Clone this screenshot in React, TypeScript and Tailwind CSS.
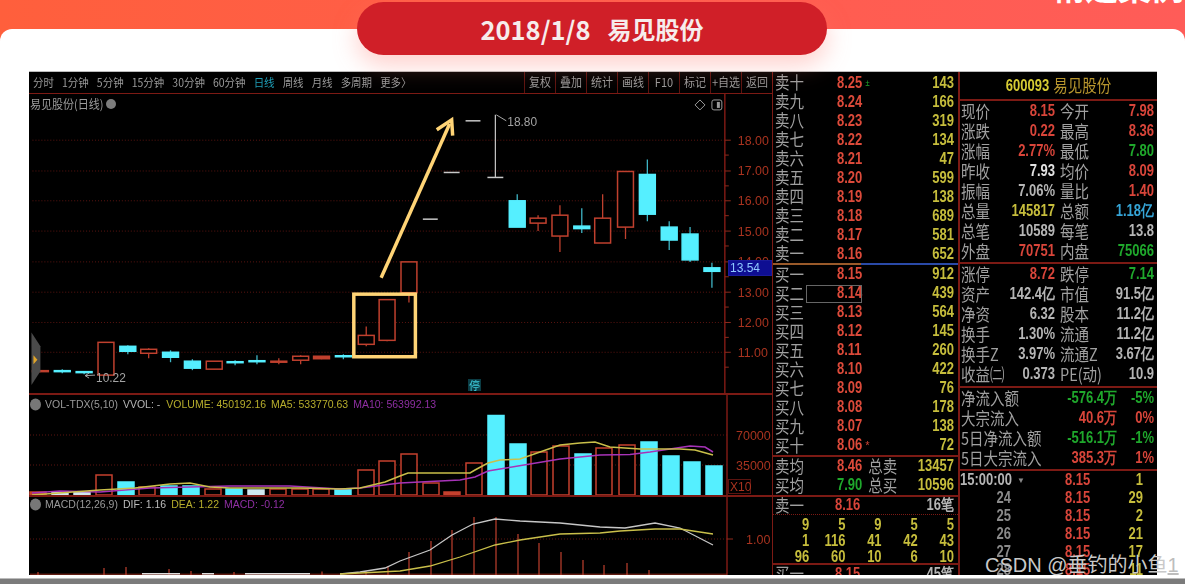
const CN = "font-['Noto_Sans_CJK_SC','Noto_Sans',sans-serif]";
const RED = "#c0402e";
const CYAN = "#55efff";

// x center, body top, body bottom, wick top, wick bottom, kind
type Candle = [number, number, number, number, number, "up" | "fill" | "down"];

const CANDLES: Candle[] = [
  [38, 371.5, 372.5, 371, 373, "fill"],
  [60, 371.5, 372.5, 370, 374, "down"],
  [82, 372.5, 373.5, 372, 375, "down"],
  [104, 343, 376, 343, 376, "up"],
  [126, 347, 352, 346, 355, "down"],
  [147, 350, 354, 349, 359, "up"],
  [169, 353, 358, 351, 363, "down"],
  [191, 362, 369, 360, 371, "down"],
  [213, 362, 370, 362, 370, "up"],
  [234, 362.5, 363.5, 361, 366, "down"],
  [256, 361.5, 362.5, 356, 365, "down"],
  [278, 362, 363, 359, 365, "fill"],
  [300, 357, 361, 356, 365, "up"],
  [321, 357, 359.5, 357, 360, "fill"],
  [343, 356.5, 357.5, 355, 360, "down"],
  [366, 336, 345, 327, 347, "up"],
  [387, 300, 341, 300, 342, "up"],
  [409, 262, 293, 262, 303, "up"],
  [518, 200.5, 227, 194, 227, "down"],
  [539, 218, 223, 215, 231, "up"],
  [561, 215, 236, 205, 252, "up"],
  [583, 226, 228.5, 208, 233, "down"],
  [604, 218, 243, 194, 243, "up"],
  [627, 171, 227, 171, 239, "up"],
  [649, 174, 214, 159, 221, "down"],
  [671, 227, 240, 221, 250, "down"],
  [692, 234, 260, 227, 262, "down"],
  [714, 268, 271.5, 263, 288, "down"],
];

// x center, bar top, kind
const VOLUME: [number, number, "up" | "fill" | "down" | "pale"][] = [
  [38, 492, "fill"], [60, 492, "pale"], [82, 492, "pale"], [104, 475, "up"],
  [126, 482, "down"], [147, 487, "up"], [169, 486, "down"], [191, 486, "down"],
  [213, 489, "up"], [234, 489, "down"], [256, 490, "pale"], [278, 489, "up"],
  [300, 489, "up"], [321, 489, "up"], [343, 489, "down"], [366, 470, "up"],
  [387, 461, "up"], [409, 454, "up"], [431, 483, "up"], [452, 492, "fill"],
  [474, 463, "up"], [496, 415.5, "down"], [518, 444, "down"], [539, 452, "up"],
  [561, 446, "up"], [583, 454, "down"], [604, 448, "up"], [627, 445, "up"],
  [649, 442, "down"], [671, 456, "down"], [692, 462, "down"], [714, 466, "down"],
];

const MA5 =
  "32,495 100,490 135,488 170,484 190,483 210,487 230,488 300,488 340,489 360,488 385,482 400,476 408,473 470,473 475,470 488,463 500,460 520,459 540,452 560,445 580,443 595,442 610,447 640,449 660,449 680,449 695,450 713,455";
const MA10 =
  "32,493 60,491 100,492 150,488 230,486 290,486 340,489 360,488 400,483 460,480 475,477 488,471 500,469 530,464 560,459 580,457 600,455 630,454.5 650,452 670,449 690,446 705,447 713,452";
const DIF =
  "340,574 360,572 385,568 400,561 430,550 452,535 473,524 495,519 520,521 560,523 600,527 625,528 655,523 680,528 713,545";
const DEA =
  "340,574 400,571 430,566 460,557 495,545 520,540 560,534 600,533 620,531 655,529 680,529 713,534";

const MACD_BARS: [number, number][] = [
  [38, 572], [104, 568], [126, 567], [169, 569], [191, 571], [234, 572], [322, 571.5], [366, 571],
  [388, 566], [409, 552], [431, 541], [452, 530], [474, 517], [496, 517], [518, 534],
  [539, 543], [561, 552], [583, 560], [604, 565], [627, 563], [649, 570],
];

const PRICES: [string, number][] = [
  ["18.00", 139.5], ["17.00", 170.5], ["16.00", 200.5], ["15.00", 231],
  ["14.00", 262], ["13.00", 292.5], ["12.00", 323], ["11.00", 353],
];

const ASK: [string, string, string][] = [
  ["卖十", "8.25", "143"], ["卖九", "8.24", "166"], ["卖八", "8.23", "319"], ["卖七", "8.22", "134"],
  ["卖六", "8.21", "47"], ["卖五", "8.20", "599"], ["卖四", "8.19", "138"], ["卖三", "8.18", "689"],
  ["卖二", "8.17", "581"], ["卖一", "8.16", "652"],
];
const BID: [string, string, string][] = [
  ["买一", "8.15", "912"], ["买二", "8.14", "439"], ["买三", "8.13", "564"], ["买四", "8.12", "145"],
  ["买五", "8.11", "260"], ["买六", "8.10", "422"], ["买七", "8.09", "76"], ["买八", "8.08", "178"],
  ["买九", "8.07", "138"], ["买十", "8.06", "72"],
];

const QUOTE_A: [string, string, string, string, string, string][] = [
  ["现价", "8.15", "text-[#d8453a]", "今开", "7.98", "text-[#d8453a]"],
  ["涨跌", "0.22", "text-[#d8453a]", "最高", "8.36", "text-[#d8453a]"],
  ["涨幅", "2.77%", "text-[#d8453a]", "最低", "7.80", "text-[#1fa82c]"],
  ["昨收", "7.93", "text-[#e2e2e2]", "均价", "8.09", "text-[#d8453a]"],
  ["振幅", "7.06%", "text-[#b5b5b5]", "量比", "1.40", "text-[#d8453a]"],
  ["总量", "145817", "text-[#c6bd3c]", "总额", "1.18亿", "text-[#35a4d6]"],
  ["总笔", "10589", "text-[#b5b5b5]", "每笔", "13.8", "text-[#b5b5b5]"],
  ["外盘", "70751", "text-[#d8453a]", "内盘", "75066", "text-[#1fa82c]"],
];
const QUOTE_B: [string, string, string, string, string, string][] = [
  ["涨停", "8.72", "text-[#d8453a]", "跌停", "7.14", "text-[#1fa82c]"],
  ["资产", "142.4亿", "text-[#b5b5b5]", "市值", "91.5亿", "text-[#b5b5b5]"],
  ["净资", "6.32", "text-[#b5b5b5]", "股本", "11.2亿", "text-[#b5b5b5]"],
  ["换手", "1.30%", "text-[#b5b5b5]", "流通", "11.2亿", "text-[#b5b5b5]"],
  ["换手Z", "3.97%", "text-[#b5b5b5]", "流通Z", "3.67亿", "text-[#b5b5b5]"],
  ["收益㈡", "0.373", "text-[#b5b5b5]", "PE(动)", "10.9", "text-[#b5b5b5]"],
];
const FLOW: [string, string, string, string][] = [
  ["净流入额", "-576.4万", "-5%", "text-[#1fa82c]"],
  ["大宗流入", "40.6万", "0%", "text-[#d8453a]"],
  ["5日净流入额", "-516.1万", "-1%", "text-[#1fa82c]"],
  ["5日大宗流入", "385.3万", "1%", "text-[#d8453a]"],
];
const TICKS: [string, string, string][] = [
  ["15:00:00", "8.15", "1"], ["24", "8.15", "29"], ["25", "8.15", "2"],
  ["26", "8.15", "21"], ["27", "8.15", "17"], ["28", "8.15", "11"],
];
const DEAL: string[][] = [
  ["9", "5", "9", "5", "5"],
  ["1", "116", "41", "42", "43"],
  ["96", "60", "10", "6", "10"],
];

const PERIODS = ["分时", "1分钟", "5分钟", "15分钟", "30分钟", "60分钟", "日线", "周线", "月线", "多周期", "更多〉"];
const TOOLS = ["复权", "叠加", "统计", "画线", "F10", "标记", "+自选", "返回"];

function Num({ children, className = "" }: { children: React.ReactNode; className?: string }) {
  return (
    <span className={`inline-block scale-y-125 font-['Liberation_Sans',sans-serif] text-[13px] font-bold whitespace-nowrap ${className}`}>
      {children}
    </span>
  );
}

function Cn({ children, className = "" }: { children: React.ReactNode; className?: string }) {
  return (
    <span className={`inline-block scale-y-[1.2] text-[14.5px] leading-none whitespace-nowrap text-[#a0a0a0] ${CN} ${className}`}>
      {children}
    </span>
  );
}

function DepthRow({ row, mark }: { row: [string, string, string]; mark?: React.ReactNode }) {
  return (
    <div className="flex h-[19px] items-center pr-[4px] pl-[2px]">
      <Cn className="w-[62px]">{row[0]}</Cn>
      <Num className="text-[#dc4a3a]">{row[1]}</Num>
      {mark}
      <Num className="ml-auto text-[#c6bd3c]">{row[2]}</Num>
    </div>
  );
}

function QuoteRow({ row }: { row: [string, string, string, string, string, string] }) {
  return (
    <div className="flex h-[20px] items-center">
      <div className="flex w-[95px] shrink-0 items-center pl-[1px]">
        <Cn>{row[0]}</Cn>
        <Num className={`ml-auto ${row[2]}`}>{row[1]}</Num>
      </div>
      <div className="flex flex-1 items-center pr-[3px] pl-[5px]">
        <Cn>{row[3]}</Cn>
        <Num className={`ml-auto ${row[5]}`}>{row[4]}</Num>
      </div>
    </div>
  );
}

function Candles() {
  return (
    <g>
      {CANDLES.map(([x, top, bottom, wickTop, wickBottom, kind], i) => {
        const stroke = kind === "down" ? CYAN : RED;
        const fill = kind === "up" ? "#000" : stroke;
        return (
          <g key={i}>
            <line x1={x} x2={x} y1={wickTop} y2={wickBottom} stroke={kind === "down" ? "#3fb6c6" : RED} strokeWidth="1.3" />
            <rect x={x - 8} y={top} width="16" height={bottom - top} fill={fill} stroke={stroke} strokeWidth="1.5" />
          </g>
        );
      })}
    </g>
  );
}

function DottedGrid({ ys, x2 = 727 }: { ys: number[]; x2?: number }) {
  return (
    <g>
      {ys.map((y) => (
        <line key={y} x1="30" x2={x2} y1={y} y2={y} stroke="#5c1410" strokeWidth="1" strokeDasharray="1 2" />
      ))}
    </g>
  );
}

function PricePane() {
  return (
    <div className="relative h-[301px] border-b-2 border-[#7c1a14]">
      <svg className="block h-full w-full" viewBox="29 93 743 301">
        <DottedGrid ys={PRICES.map((p) => p[1])} />
        <line x1="727" x2="727" y1="93" y2="394" stroke="#7c1a14" strokeWidth="1.5" />
        {PRICES.map(([label, y]) => (
          <g key={label}>
            <line x1="727" x2="733" y1={y} y2={y} stroke="#8f2a1c" />
            <line x1="727" x2="731" y1={y + 15} y2={y + 15} stroke="#8f2a1c" />
            <text x="740" y={y + 4.5} fontSize="12.5" fill="#a8331f" fontFamily="Liberation Sans">
              {label}
            </text>
          </g>
        ))}
        <Candles />
        {/* limit-up days, open = close */}
        <line x1="423" x2="438" y1="219" y2="219" stroke="#c8c8c8" strokeWidth="1.5" />
        <line x1="444" x2="460" y1="172" y2="172" stroke="#c8c8c8" strokeWidth="1.5" />
        <line x1="466" x2="481" y1="120" y2="120" stroke="#c8c8c8" strokeWidth="1.5" />
        <line x1="488" x2="504" y1="177" y2="177" stroke="#c8c8c8" strokeWidth="1.5" />
        <line x1="496" x2="496" y1="114" y2="177" stroke="#c8c8c8" strokeWidth="1.2" />
        <path d="M497 114 L507 120" stroke="#a8a8a8" fill="none" />
        <text x="508" y="125" fontSize="12" fill="#a3a3a3" fontFamily="Liberation Sans">18.80</text>
        <path d="M93 376 L83 376.5 M83 376.5 L87 374 M83 376.5 L87 379" stroke="#a3a3a3" fill="none" />
        <text x="94" y="383" fontSize="12" fill="#a3a3a3" fontFamily="Liberation Sans">10.22</text>
        <path d="M29 333 L38 347 L38 372 L29 386 Z" fill="#4a4a4a" />
        <path d="M31 356 L35 360.5 L31 365 Z" fill="#e0a52a" />
        <path d="M702 99 L707 104 L702 109 L697 104 Z" fill="none" stroke="#9a9a9a" />
        <rect x="714" y="99" width="10" height="10" rx="2" fill="none" stroke="#9a9a9a" />
        <rect x="719" y="101" width="3" height="6" fill="#9a9a9a" />
        {/* hand drawn marks */}
        <rect x="353.5" y="294.5" width="62" height="63" fill="none" stroke="#ffd476" strokeWidth="3.5" />
        <line x1="381" x2="450" y1="278" y2="123" stroke="#ffd476" strokeWidth="3.5" />
        <path d="M437 129 L452 119 L453 135" fill="none" stroke="#ffd476" strokeWidth="3.5" />
      </svg>
      <div className="absolute top-[1px] left-[1px] flex items-center gap-[3px]">
        <span className={`scale-y-110 text-[11px] leading-[18px] whitespace-nowrap text-[#9c9c9c] ${CN}`}>易见股份(日线)</span>
        <span className="h-[10px] w-[10px] rounded-full bg-[#7d7d7d]" />
      </div>
      <span className={`absolute top-[285px] left-[439px] bg-[#0b3c44] px-[1px] text-[11px] leading-[12px] text-[#3fd0e0] ${CN}`}>停</span>
      <span className="absolute top-[166px] left-[699px] h-[16px] w-[44px] border border-[#1a1a9a] bg-[#0e0e92] pl-[1px] font-['Liberation_Sans',sans-serif] text-[12px] leading-[14px] text-[#8fc8ff]">
        13.54
      </span>
    </div>
  );
}

function PaneTitle({ top, children }: { top: string; children: React.ReactNode }) {
  return (
    <div className={`absolute left-[1px] flex scale-y-110 items-center gap-[5px] font-['Liberation_Sans',sans-serif] text-[10.5px] leading-[14px] whitespace-nowrap ${top}`}>
      <span className="mr-[-1px] h-[11px] w-[11px] rounded-full bg-[#777]" />
      {children}
    </div>
  );
}

function VolumePane() {
  return (
    <div className="relative h-[102px] border-b-2 border-[#7c1a14]">
      <svg className="block h-full w-full" viewBox="29 395 743 100">
        <DottedGrid ys={[435, 465]} />
        <line x1="727" x2="727" y1="395" y2="496" stroke="#7c1a14" strokeWidth="1.5" />
        {VOLUME.map(([x, top, kind]) => {
          const color = kind === "down" ? CYAN : kind === "pale" ? "#cfe9f0" : "#c5402e";
          return (
            <rect
              key={x}
              x={x - 8}
              y={top}
              width="16"
              height={495 - top}
              fill={kind === "up" ? "#000" : color}
              stroke={color}
              strokeWidth="1.5"
            />
          );
        })}
        <polyline points={MA10} fill="none" stroke="#a733b8" strokeWidth="1.5" />
        <polyline points={MA5} fill="none" stroke="#c9bf4a" strokeWidth="1.5" />
        <text x="736" y="439.5" fontSize="12.5" fill="#a8331f" fontFamily="Liberation Sans">70000</text>
        <text x="736" y="469.5" fontSize="12.5" fill="#a8331f" fontFamily="Liberation Sans">35000</text>
        <rect x="728.5" y="479.5" width="22" height="14" fill="none" stroke="#5c1410" />
        <text x="730" y="491" fontSize="12" fill="#a8331f" fontFamily="Liberation Sans">X10</text>
      </svg>
      <PaneTitle top="top-[2px]">
        <span className="text-[#9a9a9a]">VOL-TDX(5,10)</span>
        <span className="text-[#b5b5b5]">VVOL: -</span>
        <span className="ml-[1px] text-[#b7ae2c]">VOLUME: 450192.16</span>
        <span className="text-[#b7ae2c]">MA5: 533770.63</span>
        <span className="text-[#8f2fa3]">MA10: 563992.13</span>
      </PaneTitle>
    </div>
  );
}

function MacdPane() {
  return (
    <div className="relative flex-1">
      <svg className="block h-full w-full" viewBox="29 497 743 78" preserveAspectRatio="none">
        <DottedGrid ys={[539]} />
        <line x1="727" x2="727" y1="497" y2="575" stroke="#7c1a14" strokeWidth="1.5" />
        <line x1="30" x2="727" y1="574.2" y2="574.2" stroke="#8f2a1c" strokeWidth="1" />
        {MACD_BARS.map(([x, top]) => (
          <line key={x} x1={x} x2={x} y1={top} y2="575" stroke={RED} strokeWidth="1.2" />
        ))}
        <path d="M142 573.8 H180 M202 573.8 H214 M245 573.8 H310" stroke="#ddd" strokeWidth="1.4" />
        <polyline points={DIF} fill="none" stroke="#c6c6c6" strokeWidth="1.3" />
        <polyline points={DEA} fill="none" stroke="#c9bf4a" strokeWidth="1.3" />
        <line x1="727" x2="733" y1="539" y2="539" stroke="#8f2a1c" />
        <text x="746" y="543.5" fontSize="12.5" fill="#a8331f" fontFamily="Liberation Sans">1.00</text>
      </svg>
      <PaneTitle top="top-[0px]">
        <span className="text-[#9a9a9a]">MACD(12,26,9)</span>
        <span className="text-[#bdbdbd]">DIF: 1.16</span>
        <span className="text-[#b7ae2c]">DEA: 1.22</span>
        <span className="text-[#8f2fa3]">MACD: -0.12</span>
      </PaneTitle>
    </div>
  );
}

function Toolbar() {
  return (
    <div className={`flex h-[22px] items-stretch border-b border-[#7c1a14] text-[#9a9a9a] ${CN}`}>
      <div className="flex flex-1 items-center gap-[8px] pl-[4px] text-[10.5px]">
        {PERIODS.map((p) => (
          <span key={p} className={`scale-y-110 whitespace-nowrap ${p === "日线" ? "text-[#1f9fb8]" : ""}`}>
            {p}
          </span>
        ))}
      </div>
      {TOOLS.map((t) => (
        <span key={t} className="flex w-[31px] items-center justify-center border-l border-[#5c1410] text-[11px] whitespace-nowrap">
          <span className="scale-y-110">{t}</span>
        </span>
      ))}
    </div>
  );
}

function DepthColumn() {
  return (
    <div className="w-[186px] shrink-0 border-l border-[#7c1a14] pt-[1px]">
      {ASK.map((r, i) => (
        <DepthRow key={r[0]} row={r} mark={i === 0 ? <span className="ml-[3px] text-[8px] leading-none text-[#1fa82c]">±</span> : undefined} />
      ))}
      <div className="flex h-[1.5px]">
        <div className="w-[88px] bg-[#9a5a2a]" />
        <div className="flex-1 bg-[#2a4aa8]" />
      </div>
      {BID.map((r, i) => (
        <div key={r[0]} className="relative">
          <DepthRow row={r} mark={i === 9 ? <span className="ml-[3px] text-[8px] leading-none text-[#dc4a3a]">*</span> : undefined} />
          {i === 1 && <span className="absolute top-[1px] left-[33px] h-[18px] w-[56px] border border-[#666]" />}
        </div>
      ))}
      <div className="border-t-2 border-b-2 border-[#7c1a14]">
        <div className="flex h-[19px] items-center pr-[4px] pl-[2px]">
          <Cn className="w-[62px]">卖均</Cn>
          <Num className="text-[#dc4a3a]">8.46</Num>
          <Cn className="ml-[6px]">总卖</Cn>
          <Num className="ml-auto text-[#c6bd3c]">13457</Num>
        </div>
        <div className="flex h-[19px] items-center pr-[4px] pl-[2px]">
          <Cn className="w-[62px]">买均</Cn>
          <Num className="text-[#1fa82c]">7.90</Num>
          <Cn className="ml-[6px]">总买</Cn>
          <Num className="ml-auto text-[#c6bd3c]">10596</Num>
        </div>
      </div>
      <div className="flex h-[18px] items-center border-b border-dotted border-[#7c1a14] pr-[4px] pl-[2px]">
        <Cn className="w-[60px]">卖一</Cn>
        <Num className="text-[#d8453a]">8.16</Num>
        <Num className="ml-auto text-[#b5b5b5]">16笔</Num>
      </div>
      <div className="border-b-2 border-[#7c1a14] pr-[4px]">
        {DEAL.map((line, i) => (
          <div key={i} className="grid h-[16px] grid-cols-5 items-center text-right">
            {line.map((v, j) => (
              <Num key={j} className="text-[#c6bd3c]">{v}</Num>
            ))}
          </div>
        ))}
      </div>
      <div className="flex h-[18px] items-center pr-[4px] pl-[2px]">
        <Cn className="w-[60px]">买一</Cn>
        <Num className="text-[#d8453a]">8.15</Num>
        <Num className="ml-auto text-[#b5b5b5]">45笔</Num>
      </div>
    </div>
  );
}

function InfoColumn() {
  return (
    <div className="flex-1 border-l-2 border-[#7c1a14]">
      <div className="flex h-[29px] items-center justify-center gap-[4px] border-b-2 border-[#7c1a14]">
        <Num className="text-[#d6cb34]">600093</Num>
        <Cn className="text-[#b8962e]">易见股份</Cn>
      </div>
      <div className="border-b-2 border-[#7c1a14] pb-[1px]">
        {QUOTE_A.map((r) => <QuoteRow key={r[0]} row={r} />)}
      </div>
      <div className="border-b-2 border-[#7c1a14] pb-[2px]">
        {QUOTE_B.map((r) => <QuoteRow key={r[0]} row={r} />)}
      </div>
      <div className="border-b-2 border-[#7c1a14] pb-[1px]">
        {FLOW.map((r) => (
          <div key={r[0]} className="flex h-[20px] items-center pr-[3px] pl-[1px]">
            <Cn>{r[0]}</Cn>
            <Num className={`ml-auto ${r[3]}`}>{r[1]}</Num>
            <Num className={`w-[37px] text-right ${r[3]}`}>{r[2]}</Num>
          </div>
        ))}
      </div>
      {TICKS.map((t, i) => (
        <div key={t[0]} className="flex h-[18px] items-center">
          <Num className={`w-[51px] text-right ${i === 0 ? "text-[#b5b5b5]" : "text-[#8a8a8a]"}`}>{t[0]}</Num>
          <span className="w-[54px] pl-[6px] text-[8px] text-[#888]">{i === 0 ? "▼" : ""}</span>
          <Num className="text-[#d8453a]">{t[1]}</Num>
          <Num className="mr-[14px] ml-auto text-[#c6bd3c]">{t[2]}</Num>
        </div>
      ))}
    </div>
  );
}

export default function App() {
  return (
    <div className="relative flex h-[584px] w-[1185px] flex-col overflow-hidden bg-gradient-to-r from-[#ff5f3c] to-[#ff5c58] pt-[29px]">
      <span className={`absolute -top-[38px] left-[1052px] text-[33px] font-bold whitespace-nowrap text-white ${CN}`}>精选案例</span>

      <div className="flex-1 rounded-t-[12px] bg-white pt-[42px] pl-[29px]">
        <div className="flex h-[504px] w-[1128px] overflow-hidden border-t border-[#bbb] bg-black blur-[0.5px]">
          <div className="flex w-[743px] shrink-0 flex-col">
            <Toolbar />
            <PricePane />
            <VolumePane />
            <MacdPane />
          </div>
          <DepthColumn />
          <InfoColumn />
        </div>
      </div>
      <div className="h-[6px] border-t border-[#bbb] bg-[#7b7b7b]" />

      <div className="absolute top-[2px] left-[357px] flex h-[53px] w-[470px] items-center justify-center gap-[17px] rounded-[27px] bg-[#d01f28] font-['Noto_Sans_CJK_SC',sans-serif] leading-none font-bold whitespace-nowrap text-[#f6ecec] shadow-[0_10px_24px_rgba(255,120,110,0.35)]">
        <span className="text-[25.5px]">2018/1/8</span>
        <span className="text-[24px]">易见股份</span>
      </div>

      <div className="absolute top-[551px] left-[985px] font-['Liberation_Sans','Noto_Sans_CJK_SC',sans-serif] text-[20px] leading-[28px] whitespace-nowrap text-[#c9c9c9]">
        CSDN @垂钓的小鱼<span className="text-[#bdbdbd] underline">1</span>
      </div>
    </div>
  );
}
